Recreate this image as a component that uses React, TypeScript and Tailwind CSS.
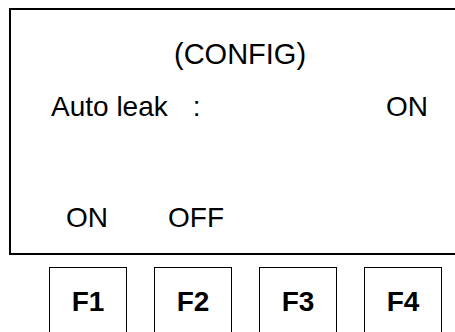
export default function App() {
  const keys = ["F1", "F2", "F3", "F4"];

  return (
    <div className="w-[455px] h-[332px] overflow-hidden bg-white text-black font-['Liberation_Sans',Arial,sans-serif]">
      {/* LCD screen */}
      <div className="ml-[9px] mt-[8px] w-[470px] h-[247px] border-[2.5px] border-black">
        <div className="pt-[28px] pl-[163px] text-[29px] leading-[32px]">(CONFIG)</div>

        <div className="mt-[21px] flex text-[28px] leading-[32px]">
          <span className="pl-[40px] w-[375px]">
            Auto leak<span className="ml-[25px]">:</span>
          </span>
          <span>ON</span>
        </div>

        <div className="mt-[79px] flex text-[28px] leading-[32px]">
          <span className="pl-[55px] w-[157px]">ON</span>
          <span>OFF</span>
        </div>
      </div>

      {/* Function keys */}
      <div className="ml-[49px] mt-[12px] flex gap-[27px]">
        {keys.map((k) => (
          <div
            key={k}
            className="w-[78px] h-[80px] shrink-0 border-[1.5px] border-black pt-[18px] text-center text-[28px] leading-[32px] font-bold"
          >
            {k}
          </div>
        ))}
      </div>
    </div>
  );
}
